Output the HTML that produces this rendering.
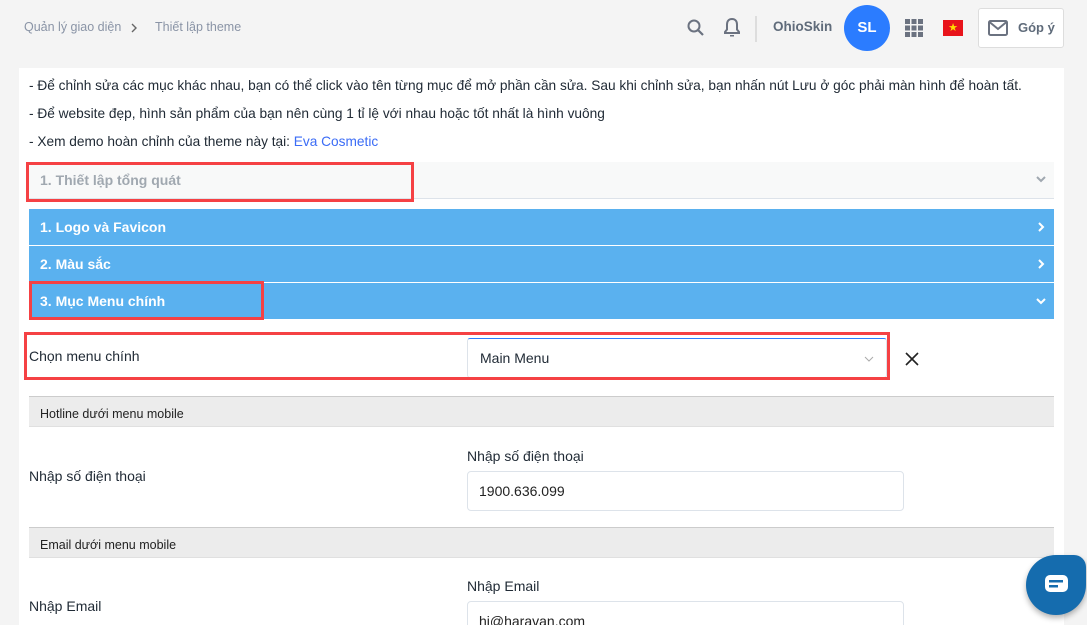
<!DOCTYPE html>
<html><head><meta charset="utf-8"><style>
*{margin:0;padding:0;box-sizing:border-box}
html,body{width:1087px;height:625px;overflow:hidden}
body{background:#f4f4f4;font-family:"Liberation Sans",Arial,sans-serif;position:relative;color:#212b36}
.a{position:absolute}
.bc{font-size:12.5px;color:#8a94a6;top:20px}
.panel{left:19px;top:68px;width:1045px;height:560px;background:#fff}
.ln{left:29px;font-size:13.7px;color:#212b36;white-space:nowrap}
.blue{left:29px;width:1025px;height:36px;background:#5ab1ef;color:#fff;font-weight:bold;font-size:14px;line-height:36px;padding-left:11px}
.red{border:3px solid #f54144}
.gh{left:29px;width:1025px;height:31px;background:#ececec;border-top:1px solid #ccc;border-bottom:1px solid #e0e0e0;font-size:12.5px;line-height:34px;padding-left:11px;color:#222}
.inp{left:467px;width:437px;height:40px;border:1px solid #dde3ea;border-radius:4px;font-size:14px;line-height:38px;padding-left:11px;color:#222}
.chev{position:absolute;right:8px;top:13px}
</style></head><body>
<div class="a bc" style="left:24px">Quản lý giao diện</div>
<svg class="a" style="left:130px;top:23px" width="8" height="10"><path d="M2 1l4 4-4 4" fill="none" stroke="#666" stroke-width="1.4"/></svg>
<div class="a bc" style="left:155px">Thiết lập theme</div>

<svg class="a" style="left:686px;top:18px" width="20" height="20" viewBox="0 0 20 20"><circle cx="8" cy="8" r="5.5" fill="none" stroke="#6b7280" stroke-width="2"/><path d="M12 12l5 5" stroke="#6b7280" stroke-width="2.2"/></svg>
<svg class="a" style="left:723px;top:17px" width="18" height="22" viewBox="0 0 18 22"><path d="M9 2c-3.5 0-5 2.5-5 5.5v5L2 15v1h14v-1l-2-2.5v-5C14 4.5 12.5 2 9 2z" fill="none" stroke="#6b7280" stroke-width="2"/><path d="M7 18h4v1.5H7z" fill="#6b7280"/></svg>
<div class="a" style="left:755px;top:16px;width:2px;height:26px;background:#ddd"></div>
<div class="a" style="left:773px;top:19px;font-size:13.5px;font-weight:bold;color:#5f6b7a">OhioSkin</div>
<div class="a" style="left:844px;top:5px;width:46px;height:46px;border-radius:50%;background:#2b7cff;color:#fff;font-weight:bold;font-size:15px;text-align:center;line-height:46px">SL</div>
<svg class="a" style="left:905px;top:19px" width="18" height="18"><g fill="#6b7280"><rect x="0" y="0" width="5" height="5"/><rect x="6.5" y="0" width="5" height="5"/><rect x="13" y="0" width="5" height="5"/><rect x="0" y="6.5" width="5" height="5"/><rect x="6.5" y="6.5" width="5" height="5"/><rect x="13" y="6.5" width="5" height="5"/><rect x="0" y="13" width="5" height="5"/><rect x="6.5" y="13" width="5" height="5"/><rect x="13" y="13" width="5" height="5"/></g></svg>
<div class="a" style="left:943px;top:20px;width:20px;height:16px;background:#e8141b;color:#ffdd00;font-size:11px;text-align:center;line-height:16px">★</div>
<div class="a" style="left:978px;top:8px;width:86px;height:40px;background:#fff;border:1px solid #ddd;border-radius:3px"></div>
<svg class="a" style="left:988px;top:20px" width="20" height="16"><rect x="1" y="1" width="18" height="14" rx="1.5" fill="none" stroke="#6b7280" stroke-width="2"/><path d="M1.5 2l8.5 7 8.5-7" fill="none" stroke="#6b7280" stroke-width="2"/></svg>
<div class="a" style="left:1018px;top:20px;font-size:13px;font-weight:bold;color:#5f6b7a">Góp ý</div>

<div class="a panel"></div>
<div class="a ln" style="top:78px">- Để chỉnh sửa các mục khác nhau, bạn có thể click vào tên từng mục để mở phần cần sửa. Sau khi chỉnh sửa, bạn nhấn nút Lưu ở góc phải màn hình để hoàn tất.</div>
<div class="a ln" style="top:106px">- Để website đẹp, hình sản phẩm của bạn nên cùng 1 tỉ lệ với nhau hoặc tốt nhất là hình vuông</div>
<div class="a ln" style="top:134px">- Xem demo hoàn chỉnh của theme này tại: <span style="color:#3b6cf6">Eva Cosmetic</span></div>

<div class="a" style="left:29px;top:162px;width:1025px;height:37px;background:#f8f9f9;border-bottom:1px solid #dde3ea;font-weight:bold;font-size:14px;color:#a0a8b0;line-height:36px;padding-left:11px">1. Thiết lập tổng quát<svg class="chev" width="10" height="8"><path d="M1 2l4 4 4-4" fill="none" stroke="#a0a8b0" stroke-width="2"/></svg></div>
<div class="a red" style="left:26px;top:162px;width:388px;height:40px"></div>

<div class="a blue" style="top:209px">1. Logo và Favicon<svg class="chev" style="top:13px;right:9px" width="8" height="10"><path d="M2 1l4 4-4 4" fill="none" stroke="#fff" stroke-width="2"/></svg></div>
<div class="a blue" style="top:246px">2. Màu sắc<svg class="chev" style="top:13px;right:9px" width="8" height="10"><path d="M2 1l4 4-4 4" fill="none" stroke="#fff" stroke-width="2"/></svg></div>
<div class="a blue" style="top:283px">3. Mục Menu chính<svg class="chev" style="top:14px" width="10" height="8"><path d="M1 2l4 4 4-4" fill="none" stroke="#fff" stroke-width="2"/></svg></div>
<div class="a red" style="left:29px;top:281px;width:235px;height:39px"></div>

<div class="a" style="left:29px;top:348px;font-size:14px">Chọn menu chính</div>
<div class="a" style="left:467px;top:338px;width:420px;height:40px;border:1px solid #dde3ea;border-top:1px solid #2b7cff;border-radius:3px;font-size:14px;line-height:38px;padding-left:12px">Main Menu<svg style="position:absolute;right:12px;top:17px" width="10" height="6"><path d="M1 1l4 4 4-4" fill="none" stroke="#aaa" stroke-width="1"/></svg></div>
<div class="a red" style="left:24px;top:332px;width:866px;height:48px"></div>
<svg class="a" style="left:905px;top:352px" width="14" height="14"><path d="M1 1l12 12M13 1L1 13" stroke="#222" stroke-width="1.6"/></svg>

<div class="a gh" style="top:396px">Hotline dưới menu mobile</div>
<div class="a" style="left:29px;top:468px;font-size:14px">Nhập số điện thoại</div>
<div class="a" style="left:467px;top:448px;font-size:14px">Nhập số điện thoại</div>
<div class="a inp" style="top:471px">1900.636.099</div>

<div class="a gh" style="top:527px">Email dưới menu mobile</div>
<div class="a" style="left:29px;top:598px;font-size:14px">Nhập Email</div>
<div class="a" style="left:467px;top:578px;font-size:14px">Nhập Email</div>
<div class="a inp" style="top:601px">hi@haravan.com</div>

<div class="a" style="left:1026px;top:555px;width:60px;height:60px;background:#156cae;border-radius:50% 12px 50% 50%;box-shadow:0 3px 6px rgba(0,0,0,.3)"></div>
<svg class="a" style="left:1045px;top:575px" width="24" height="20"><rect x="0" y="0" width="23" height="17" rx="5" fill="#fff"/><rect x="4" y="5" width="14" height="2.5" fill="#156cae"/><rect x="4" y="10" width="9" height="2.5" fill="#156cae"/></svg>
</body></html>
